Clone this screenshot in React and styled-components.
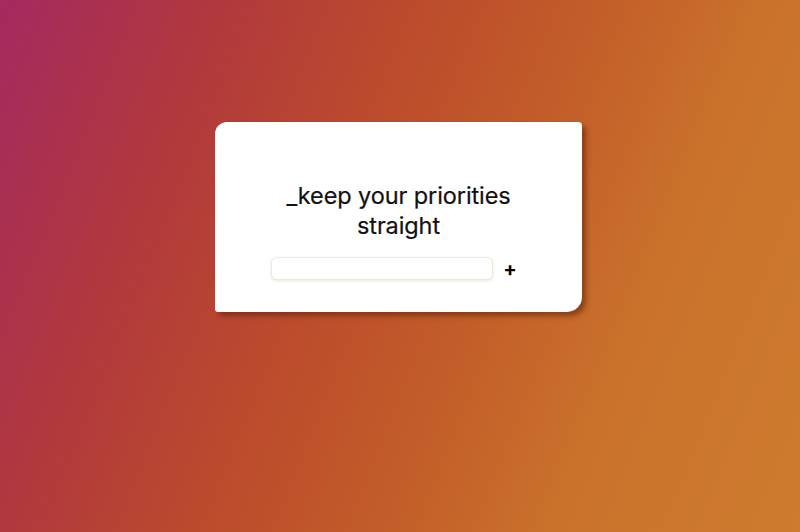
import React from "react";
import styled, { createGlobalStyle } from "styled-components";

const GlobalStyle = createGlobalStyle`
  html, body {
    margin: 0;
    padding: 0;
  }
  body {
    font-family: "Inter", "Lato", sans-serif;
  }
`;

const App = () => {
  return (
    <>
      <GlobalStyle />
      <Page>
        <Card>
          <Title>
            _keep your priorities
            <br />
            straight
          </Title>
          <AddRow>
            <TaskInput type="text" />
            <AddButton>+</AddButton>
          </AddRow>
        </Card>
      </Page>
    </>
  );
};

export default App;

const Page = styled.div`
  width: 800px;
  height: 532px;
  display: flex;
  justify-content: center;
  align-items: flex-start;
  padding-top: 122px;
  box-sizing: border-box;
  background: linear-gradient(
    112deg,
    #a42a60 0%,
    #b0373f 20%,
    #bb4a2d 40%,
    #c25c29 58%,
    #ca722c 76%,
    #cd7b2e 100%
  );
`;

const Card = styled.div`
  width: 367px;
  height: 190px;
  margin-right: 3px;
  box-sizing: border-box;
  background: #ffffff;
  border-radius: 12px 4px 15px 3px;
  box-shadow: 4px 4px 5px rgba(90, 35, 10, 0.55);
  display: flex;
  flex-direction: column;
  align-items: center;
  padding-top: 59px;
`;

const Title = styled.h1`
  margin: 0;
  font-size: 23.5px;
  font-weight: 400;
  line-height: 30px;
  color: #111111;
  text-align: center;
  letter-spacing: -0.1px;
  -webkit-text-stroke: 0.2px #111111;
`;

const AddRow = styled.div`
  display: flex;
  align-items: center;
  gap: 10px;
  margin-top: 16px;
  margin-right: 9px;
`;

const TaskInput = styled.input`
  width: 222px;
  height: 23px;
  box-sizing: border-box;
  border: 1px solid #efe9dc;
  border-radius: 6px;
  box-shadow: 0 1px 3px rgba(200, 180, 140, 0.35);
  outline: none;
  background: #fff;
`;

const AddButton = styled.button`
  border: none;
  background: none;
  padding: 0;
  font-family: "Inter", sans-serif;
  font-size: 20px;
  font-weight: 700;
  line-height: 20px;
  color: #000;
  cursor: pointer;
`;
